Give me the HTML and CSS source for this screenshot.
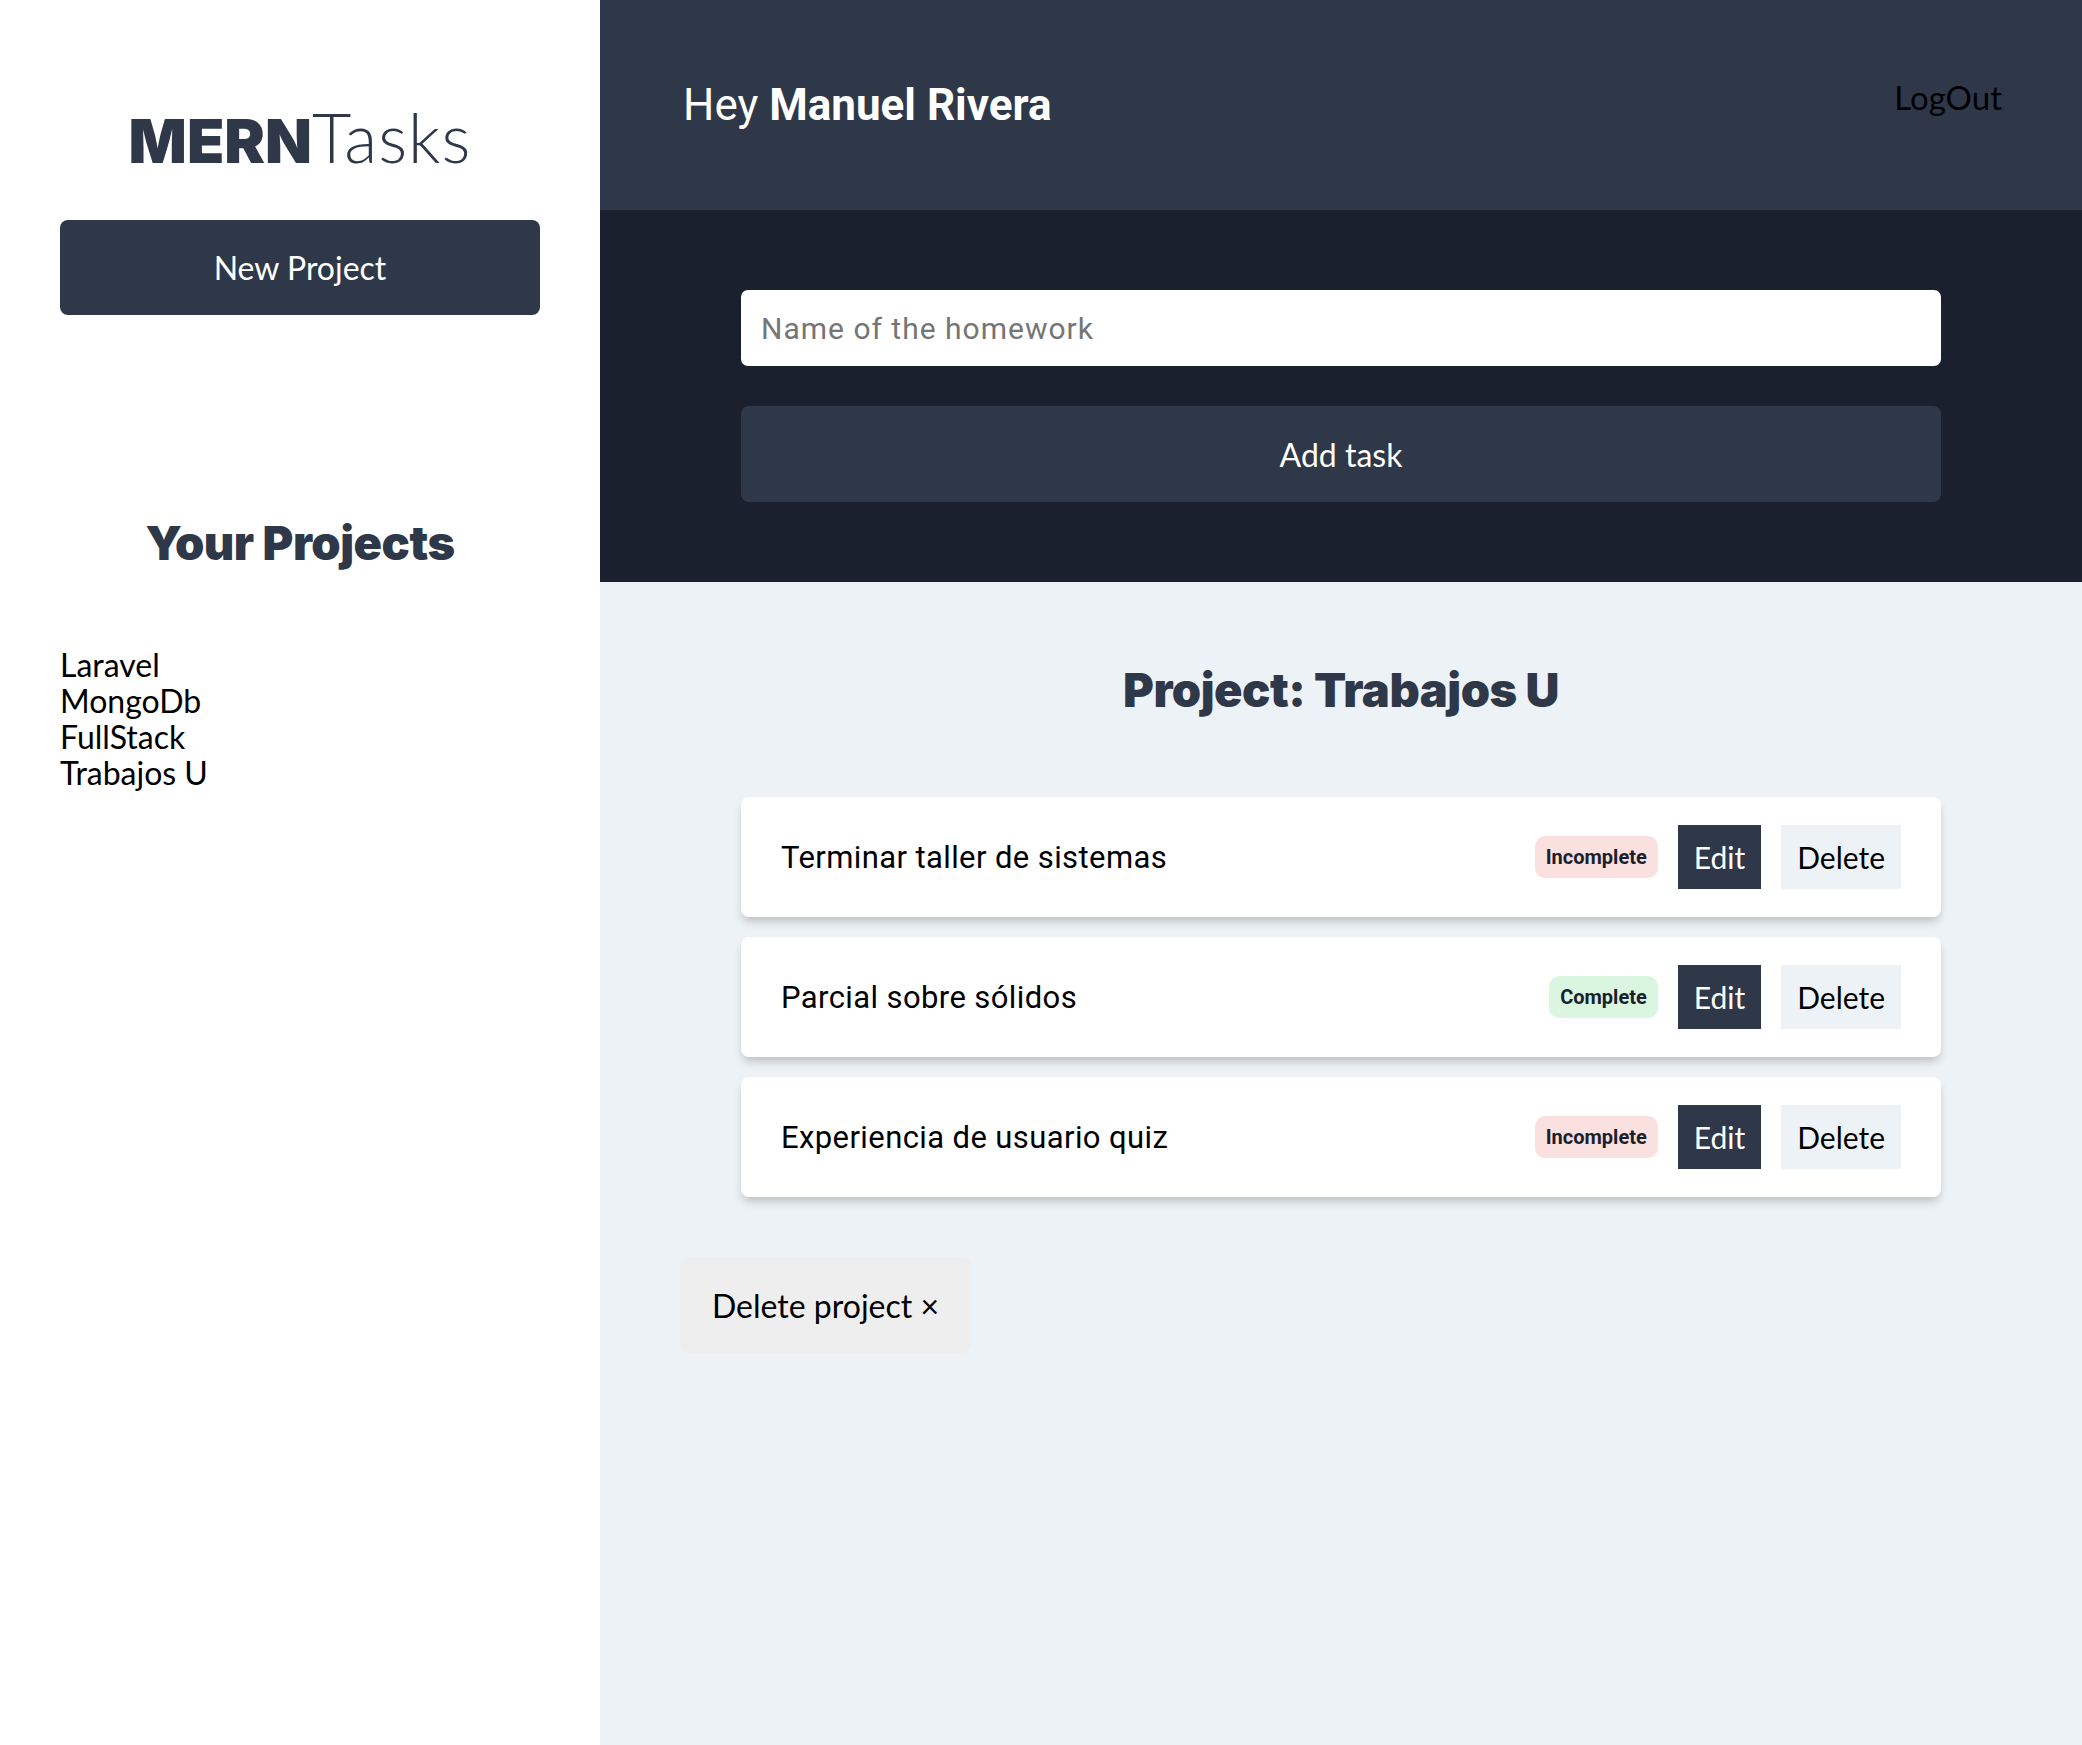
FILE: index.html
```html
<!DOCTYPE html>
<html lang="en">
<head>
<meta charset="utf-8">
<title>MERNTasks</title>
<link rel="stylesheet" href="styles.css">
</head>
<body>
<div class="app">
  <aside class="sidebar">
    <h1 class="logo"><span class="logo-bold">MERN</span><span class="logo-light">Tasks</span></h1>
    <button class="btn-new">New Project</button>
    <h2 class="projects-title">Your Projects</h2>
    <ul class="project-list">
      <li>Laravel</li>
      <li>MongoDb</li>
      <li>FullStack</li>
      <li>Trabajos U</li>
    </ul>
  </aside>
  <div class="main">
    <header class="topbar">
      <p class="greeting">Hey <strong>Manuel Rivera</strong></p>
      <span class="logout">LogOut</span>
    </header>
    <section class="form-section">
      <div class="form-inner">
        <input class="task-input" type="text" placeholder="Name of the homework">
        <button class="btn-add">Add task</button>
      </div>
    </section>
    <section class="content">
      <h2 class="project-title">Project: Trabajos U</h2>
      <ul class="task-list">
        <li class="task">
          <span class="task-name">Terminar taller de sistemas</span>
          <div class="task-actions">
            <span class="badge badge-incomplete">Incomplete</span>
            <button class="btn-edit">Edit</button>
            <button class="btn-delete">Delete</button>
          </div>
        </li>
        <li class="task">
          <span class="task-name">Parcial sobre sólidos</span>
          <div class="task-actions">
            <span class="badge badge-complete">Complete</span>
            <button class="btn-edit">Edit</button>
            <button class="btn-delete">Delete</button>
          </div>
        </li>
        <li class="task">
          <span class="task-name">Experiencia de usuario quiz</span>
          <div class="task-actions">
            <span class="badge badge-incomplete">Incomplete</span>
            <button class="btn-edit">Edit</button>
            <button class="btn-delete">Delete</button>
          </div>
        </li>
      </ul>
      <button class="btn-delete-project">Delete project &times;</button>
    </section>
  </div>
</div>
</body>
</html>
```

FILE: styles.css
```css
* { box-sizing: border-box; }

html, body {
  margin: 0;
  padding: 0;
  height: 100%;
}

body {
  font-family: "Lato", "Open Sans", sans-serif;
  color: #000;
}

button {
  font-family: inherit;
  border: none;
  cursor: pointer;
}

.app {
  display: flex;
  min-height: 1745px;
}

/* Sidebar */
.sidebar {
  width: 600px;
  flex: 0 0 600px;
  background: #fff;
  padding: 0 60px;
  display: flex;
  flex-direction: column;
}

.logo {
  margin: 100px 0 0;
  text-align: center;
  font-size: 68px;
  line-height: 74px;
  color: #2f3848;
  font-weight: 400;
}

.logo-bold {
  font-family: "Inter", "Lato", sans-serif;
  font-weight: 900;
  font-size: 61px;
  letter-spacing: 0;
}
.logo-light {
  font-weight: 300;
  letter-spacing: 1px;
}

.btn-new {
  margin-top: 42px;
  width: 480px;
  height: 95px;
  background: #2f3848;
  color: #fff;
  font-size: 32px;
  font-weight: 400;
  border-radius: 8px;
}

.projects-title {
  margin: 198px 0 0;
  text-align: center;
  font-family: "Inter", "Lato", sans-serif;
  font-size: 47px;
  line-height: 60px;
  font-weight: 900;
  letter-spacing: -0.5px;
  color: #2f3848;
}

.project-list {
  list-style: none;
  margin: 74px 0 0;
  padding: 0;
  font-size: 32px;
  line-height: 36px;
}

/* Main */
.main {
  flex: 1;
  display: flex;
  flex-direction: column;
  background: #edf2f7;
}

.topbar {
  height: 210px;
  background: #2f3848;
  padding: 0 80px 0 83px;
  display: flex;
  align-items: center;
  justify-content: space-between;
}

.greeting {
  margin: 0;
  font-family: "Roboto", sans-serif;
  font-size: 44px;
  color: #fff;
  font-weight: 400;
}

.greeting strong { font-weight: 700; }

.logout {
  font-size: 33px;
  color: #000;
  margin-bottom: 16px;
}

.form-section {
  background: #1a202d;
  padding: 80px 0;
}

.form-inner {
  width: 1200px;
  margin: 0 auto;
  display: flex;
  flex-direction: column;
  gap: 40px;
}

.task-input {
  height: 76px;
  border: none;
  border-radius: 7px;
  padding: 0 20px;
  font-family: "Roboto", sans-serif;
  font-size: 30px;
  letter-spacing: 1px;
  color: #000;
  background: #fff;
  outline: none;
}

.task-input::placeholder { color: #757575; }

.btn-add {
  height: 96px;
  background: #2f3848;
  color: #fff;
  font-size: 32px;
  border-radius: 8px;
}

.content {
  padding: 60px 80px 80px;
  display: flex;
  flex-direction: column;
}

.project-title {
  margin: 18px 0 0;
  text-align: center;
  font-family: "Inter", "Lato", sans-serif;
  font-size: 47px;
  line-height: 60px;
  font-weight: 900;
  letter-spacing: -0.5px;
  color: #2f3848;
}

.task-list {
  list-style: none;
  margin: 77px auto 0;
  padding: 0;
  width: 1200px;
  display: flex;
  flex-direction: column;
  gap: 20px;
}

.task {
  height: 120px;
  background: #fff;
  border-radius: 8px;
  box-shadow: 0 6px 10px -2px rgba(0, 0, 0, 0.22);
  display: flex;
  align-items: center;
  justify-content: space-between;
  padding: 0 40px;
}

.task-name {
  font-family: "Roboto", sans-serif;
  font-size: 31px;
  letter-spacing: 0.4px;
  color: #000;
}

.task-actions {
  display: flex;
  align-items: center;
  gap: 20px;
}

.badge {
  font-family: "Roboto", sans-serif;
  font-weight: 700;
  font-size: 20px;
  height: 42px;
  line-height: 42px;
  padding: 0 11px;
  border-radius: 10px;
  color: #1a202c;
}

.badge-incomplete { background: #fbe0e0; }
.badge-complete { background: #daf6e0; }

.btn-edit,
.btn-delete {
  height: 64px;
  font-size: 30px;
  padding: 0 16px;
}

.btn-edit {
  background: #2f3848;
  color: #fff;
}

.btn-delete {
  background: #edf2f7;
  color: #000;
}

.btn-delete-project {
  align-self: flex-start;
  margin-top: 60px;
  height: 96px;
  padding: 0 32px;
  background: #eeeeee;
  color: #000;
  font-size: 32px;
  border-radius: 8px;
}
```
